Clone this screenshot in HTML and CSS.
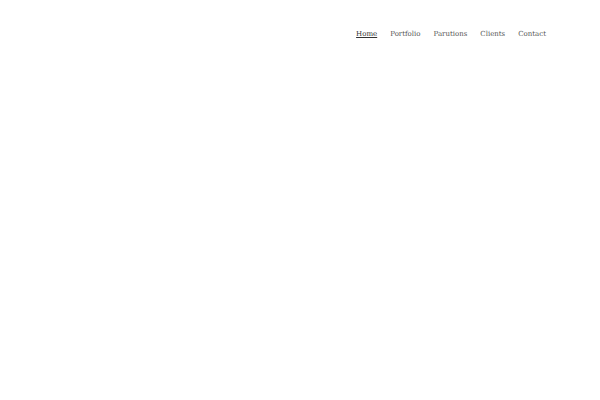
FILE: index.html
```html
<!DOCTYPE html>
<html>
<head>
<meta charset="utf-8">
<link rel="stylesheet" href="styles.css">
</head>
<body>
<header class="header">
  <nav class="nav">
    <a class="nav-link active" href="#">Home</a>
    <a class="nav-link" href="#">Portfolio</a>
    <a class="nav-link" href="#">Parutions</a>
    <a class="nav-link" href="#">Clients</a>
    <a class="nav-link" href="#">Contact</a>
  </nav>
</header>
</body>
</html>
```
FILE: styles.css
```css
html, body {
  margin: 0;
  padding: 0;
  background: #ffffff;
}
body {
  width: 600px;
  height: 400px;
  font-family: "DejaVu Serif", serif;
}
.header {
  display: flex;
  justify-content: flex-end;
  padding: 29px 54px 0 0;
}
.nav {
  display: flex;
  gap: 13px;
}
.nav-link {
  font-size: 7px;
  line-height: 10px;
  color: #555555;
  text-decoration: none;
}
.nav-link.active {
  color: #333333;
  text-decoration: underline;
}
```
